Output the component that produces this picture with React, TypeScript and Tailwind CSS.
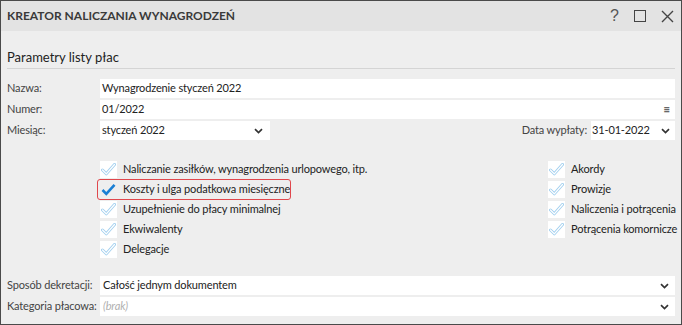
import React from "react";

const font = { fontFamily: 'Lato, "Noto Sans", sans-serif' };

function Chevron() {
  return (
    <svg width="9" height="6" viewBox="0 0 9 6" className="shrink-0">
      <path d="M1 1.2 L4.5 4.6 L8 1.2" fill="none" stroke="#333" strokeWidth="1.7" />
    </svg>
  );
}

function CheckOff() {
  return (
    <div className="w-[17px] h-[17px] bg-white flex items-center justify-center shrink-0">
      <svg width="15" height="13" viewBox="0 0 15 13">
        <path d="M1.5 7 L5.3 10.8 L13.5 1.5" fill="none" stroke="#a3d0ef" strokeWidth="3" strokeLinejoin="round" strokeLinecap="round" />
        <path d="M1.5 7 L5.3 10.8 L13.5 1.5" fill="none" stroke="#ffffff" strokeWidth="1.2" strokeLinejoin="round" strokeLinecap="round" />
      </svg>
    </div>
  );
}

function CheckOn() {
  return (
    <div className="w-[17px] h-[17px] flex items-center justify-center shrink-0">
      <svg width="15" height="13" viewBox="0 0 15 13">
        <path d="M1.5 7 L5.3 10.8 L13.5 1.8" fill="none" stroke="#1a7fd4" strokeWidth="2.6" strokeLinejoin="miter" />
      </svg>
    </div>
  );
}

function CheckRow({ label, on, highlight }: { label: string; on?: boolean; highlight?: boolean }) {
  return (
    <div className="relative h-[20px] flex items-center gap-[6px]">
      {on ? <CheckOn /> : <CheckOff />}
      <span className="text-[11px] tracking-[-0.15px] text-[#222] whitespace-nowrap">{label}</span>
      {highlight && (
        <span className="absolute left-[-3px] top-[0px] w-[194px] h-[21px] border-[1.5px] border-[#e0474c] rounded-[3px]" />
      )}
    </div>
  );
}

export default function App() {
  return (
    <div
      style={font}
      className="w-[682px] h-[325px] border border-[#4a4a4a] bg-[#eeeeee] flex flex-col text-[#222] overflow-hidden"
    >
      {/* Title bar */}
      <div className="h-[30px] bg-[#e3e3e3] flex items-center justify-between pl-[6px] pr-[7px] shrink-0">
        <span className="text-[12px] font-bold text-[#3a3a3a]">KREATOR NALICZANIA WYNAGRODZEŃ</span>
        <div className="flex items-center gap-[15px] text-[#555]">
          <span className="text-[16px] leading-none" style={{ fontFamily: '"Liberation Sans", sans-serif' }}>?</span>
          <div className="w-[12px] h-[12px] border-[1.5px] border-[#444]" />
          <svg width="13" height="13" viewBox="0 0 13 13">
            <path d="M1 1 L12 12 M12 1 L1 12" stroke="#444" strokeWidth="1.4" />
          </svg>
        </div>
      </div>

      <div className="px-[6px] flex flex-col">
        <div className="mt-[17px] pb-[2px] border-b border-[#d4d4d4] text-[13px] text-[#222] leading-[18px]">
          Parametry listy płac
        </div>

        <div className="mt-[10px] flex flex-col gap-[2px] text-[11px] tracking-[-0.15px]">
          <div className="flex items-center h-[19px]">
            <span className="w-[93px] shrink-0 text-[#444]">Nazwa:</span>
            <div className="flex-1 h-full bg-white flex items-center pl-[2px]">Wynagrodzenie styczeń 2022</div>
          </div>
          <div className="flex items-center h-[19px]">
            <span className="w-[93px] shrink-0 text-[#444]">Numer:</span>
            <div className="flex-1 h-full bg-white flex items-center justify-between pl-[2px] pr-[5px]">
              <span>01/2022</span>
              <span className="text-[12px] text-[#444]">≡</span>
            </div>
          </div>
          <div className="flex items-center h-[19px]">
            <span className="w-[93px] shrink-0 text-[#444]">Miesiąc:</span>
            <div className="w-[170px] h-full bg-white flex items-center justify-between pl-[2px] pr-[7px]">
              <span>styczeń 2022</span>
              <Chevron />
            </div>
            <div className="flex-1" />
            <span className="text-[#444] mr-[4px]">Data wypłaty:</span>
            <div className="w-[84px] h-full bg-white flex items-center justify-between pl-[1px] pr-[5px]">
              <span>31-01-2022</span>
              <Chevron />
            </div>
          </div>
        </div>

        <div className="mt-[19px] flex">
          <div className="ml-[93px] w-[448px] shrink-0 flex flex-col">
            <CheckRow label="Naliczanie zasiłków, wynagrodzenia urlopowego, itp." />
            <CheckRow label="Koszty i ulga podatkowa miesięczne" on highlight />
            <CheckRow label="Uzupełnienie do płacy minimalnej" />
            <CheckRow label="Ekwiwalenty" />
            <CheckRow label="Delegacje" />
          </div>
          <div className="flex flex-col">
            <CheckRow label="Akordy" />
            <CheckRow label="Prowizje" />
            <CheckRow label="Naliczenia i potrącenia" />
            <CheckRow label="Potrącenia komornicze" />
          </div>
        </div>

        <div className="mt-[17px] flex flex-col gap-[2px] text-[11px] tracking-[-0.15px]">
          <div className="flex items-center h-[19px]">
            <span className="w-[93px] shrink-0 text-[#444] whitespace-nowrap">Sposób dekretacji:</span>
            <div className="flex-1 h-full bg-white flex items-center justify-between pl-[3px] pr-[6px]">
              <span>Całość jednym dokumentem</span>
              <Chevron />
            </div>
          </div>
          <div className="flex items-center h-[19px]">
            <span className="w-[93px] shrink-0 text-[#444] whitespace-nowrap">Kategoria płacowa:</span>
            <div className="flex-1 h-full bg-white flex items-center justify-between pl-[3px] pr-[6px]">
              <span className="italic text-[#b0b0b0]">(brak)</span>
              <Chevron />
            </div>
          </div>
        </div>
      </div>
    </div>
  );
}
